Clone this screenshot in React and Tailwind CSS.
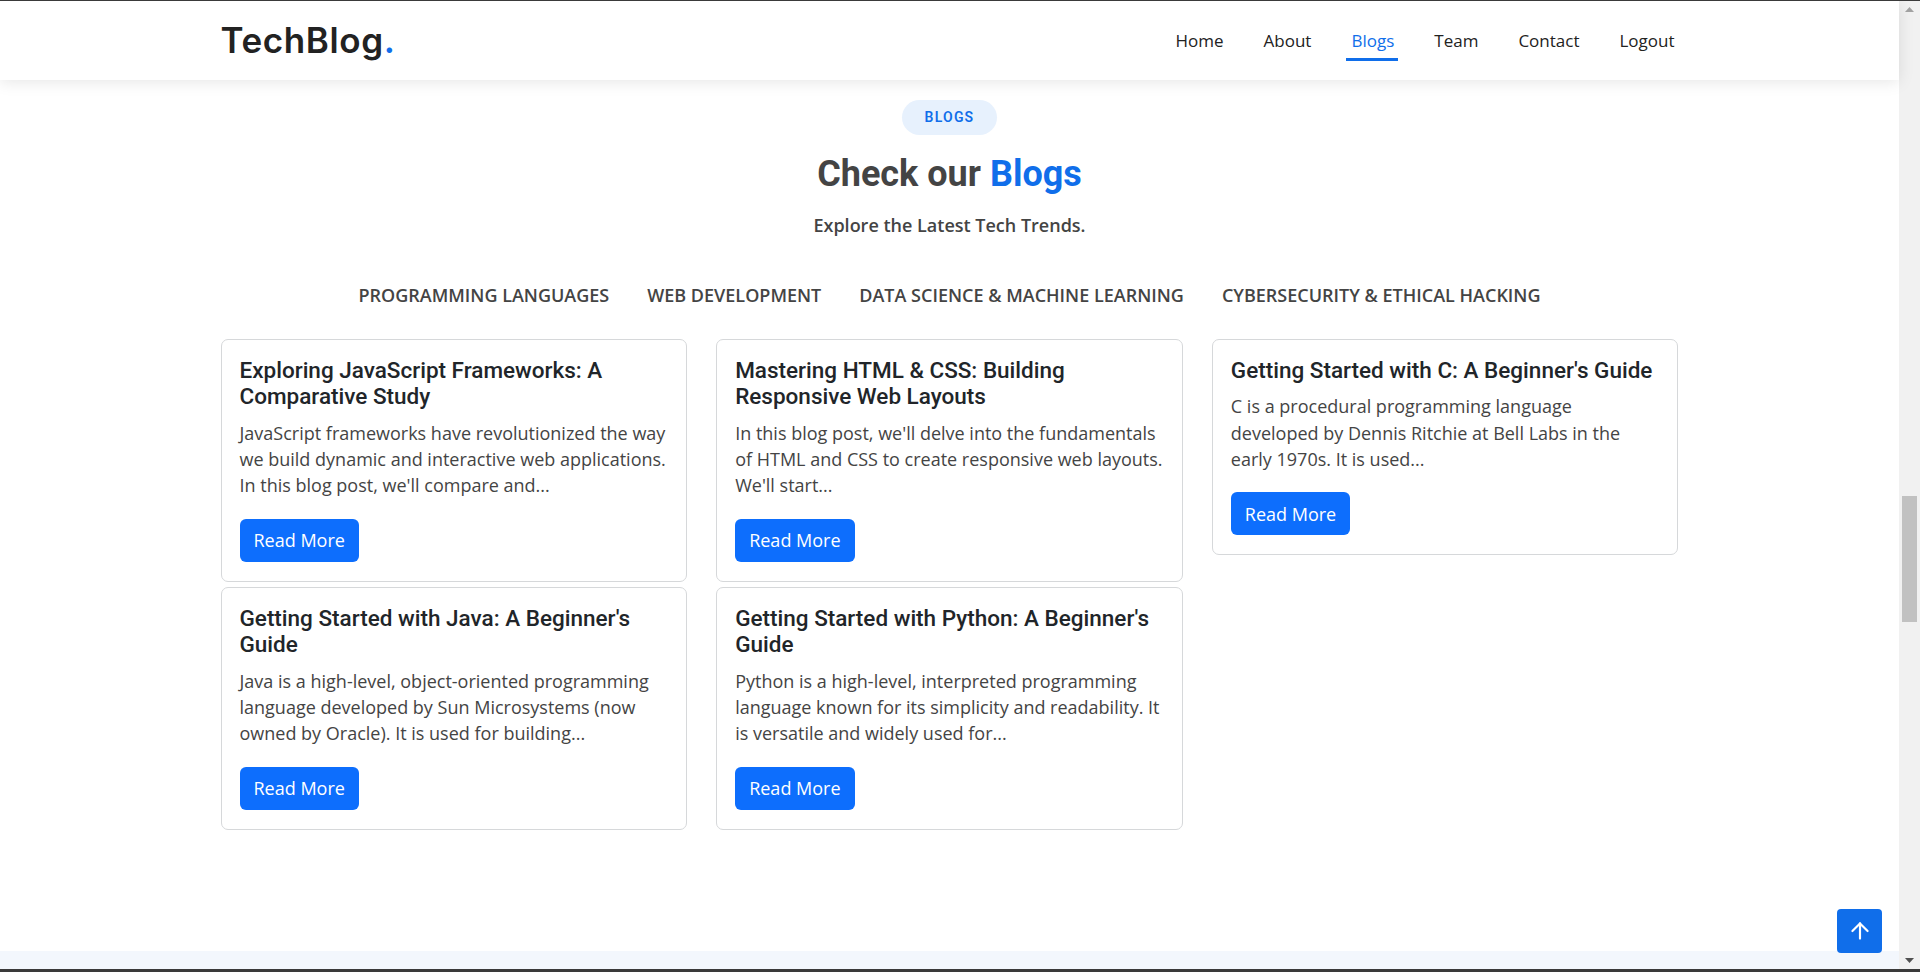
import { ArrowUp } from "lucide-react"

const navLinks = ["Home", "About", "Blogs", "Team", "Contact", "Logout"]

const categories = [
  "PROGRAMMING LANGUAGES",
  "WEB DEVELOPMENT",
  "DATA SCIENCE & MACHINE LEARNING",
  "CYBERSECURITY & ETHICAL HACKING",
]

const posts = [
  {
    title: "Exploring JavaScript Frameworks: A Comparative Study",
    text: "JavaScript frameworks have revolutionized the way we build dynamic and interactive web applications. In this blog post, we'll compare and...",
  },
  {
    title: "Mastering HTML & CSS: Building Responsive Web Layouts",
    text: "In this blog post, we'll delve into the fundamentals of HTML and CSS to create responsive web layouts. We'll start...",
  },
  {
    title: "Getting Started with C: A Beginner's Guide",
    text: "C is a procedural programming language developed by Dennis Ritchie at Bell Labs in the early 1970s. It is used...",
  },
  {
    title: "Getting Started with Java: A Beginner's Guide",
    text: "Java is a high-level, object-oriented programming language developed by Sun Microsystems (now owned by Oracle). It is used for building...",
  },
  {
    title: "Getting Started with Python: A Beginner's Guide",
    text: "Python is a high-level, interpreted programming language known for its simplicity and readability. It is versatile and widely used for...",
  },
]

function BlogCard({ post }) {
  return (
    <div className="rounded-[7px] border border-[#d6d8da] bg-white px-[18px] pt-[17px] pb-[19px]">
      <h5 className="font-['Roboto',sans-serif] text-[22.5px] font-medium leading-[26.4px] text-[#212529]">
        {post.title}
      </h5>
      <p className="mt-[10px] text-[18px] leading-[26.4px] text-[#444444]">{post.text}</p>
      <button className="mt-[20px] h-[43px] rounded-[6px] bg-[#0d6efd] px-[14px] text-[18px] leading-[26.4px] text-white">
        Read More
      </button>
    </div>
  )
}

function Scrollbar() {
  return (
    <div className="flex w-[21px] flex-col bg-[#f1f1f1]">
      <div className="flex h-[17px] items-center justify-center">
        <svg width="9" height="5" viewBox="0 0 9 5">
          <path d="M0 5 L4.5 0 L9 5 Z" fill="#a3a3a3" />
        </svg>
      </div>
      <div className="flex-1 px-[3px]">
        <div className="mt-[478px] h-[126px] bg-[#c1c1c1]" />
      </div>
      <div className="flex h-[17px] items-center justify-center">
        <svg width="9" height="5" viewBox="0 0 9 5">
          <path d="M0 0 L9 0 L4.5 5 Z" fill="#505050" />
        </svg>
      </div>
    </div>
  )
}

export default function App() {
  return (
    <div className="flex h-[972px] flex-col overflow-hidden border-t border-b-[3px] border-[#3a3a3a] bg-white font-['Open_Sans',sans-serif]">
      <div className="flex min-h-0 flex-1">
        <div className="relative flex min-w-0 flex-1 flex-col">
          <header className="relative z-10 h-[79px] flex-none bg-white shadow-[0_2px_15px_rgba(0,0,0,0.1)]">
            <div className="mx-auto flex h-full w-[1458px] items-center justify-between">
              <a className="font-['Inter',sans-serif] text-[35px] font-semibold tracking-[0.6px] text-[#222222]">
                TechBlog<span className="text-[#106eea]">.</span>
              </a>
              <nav className="flex items-center gap-[40px] pr-[4px]">
                {navLinks.map((link) => (
                  <a
                    key={link}
                    className={`relative text-[17px] leading-[26px] ${
                      link === "Blogs" ? "text-[#106eea]" : "text-[#222222]"
                    }`}
                  >
                    {link}
                    {link === "Blogs" && (
                      <span className="absolute -left-[5px] -right-[4px] top-[30px] h-[3px] bg-[#106eea]" />
                    )}
                  </a>
                ))}
              </nav>
            </div>
          </header>

          <section className="h-[871px] flex-none pt-[20px]">
            <div className="flex flex-col items-center">
              <span className="h-[35px] rounded-full bg-[#e7f1fd] px-[23px] font-['Roboto',sans-serif] text-[14px] font-semibold leading-[35px] tracking-[1.2px] text-[#106eea]">
                BLOGS
              </span>
              <h2 className="mt-[15px] font-['Roboto',sans-serif] text-[36px] font-bold leading-[48px] text-[#444444]">
                Check our <span className="text-[#106eea]">Blogs</span>
              </h2>
              <p className="mt-[14px] text-[18px] font-semibold leading-[26.4px] text-[#444444]">
                Explore the Latest Tech Trends.
              </p>
            </div>

            <ul className="mt-[44px] flex justify-center gap-[38px]">
              {categories.map((cat) => (
                <li key={cat} className="text-[18px] font-semibold leading-[26.4px] text-[#444444]">
                  {cat}
                </li>
              ))}
            </ul>

            <div className="mx-auto mt-[30px] grid w-[1458px] grid-cols-3 items-start gap-x-[29px] gap-y-[5px]">
              {posts.map((post) => (
                <BlogCard key={post.title} post={post} />
              ))}
            </div>
          </section>

          <footer className="flex-1 bg-[#f3f7fd]" />

          <a className="absolute right-[17px] bottom-[16px] flex h-[44px] w-[45px] items-center justify-center rounded-[4px] bg-[#106eea]">
            <ArrowUp size={26} strokeWidth={2} color="white" />
          </a>
        </div>
        <Scrollbar />
      </div>
    </div>
  )
}
